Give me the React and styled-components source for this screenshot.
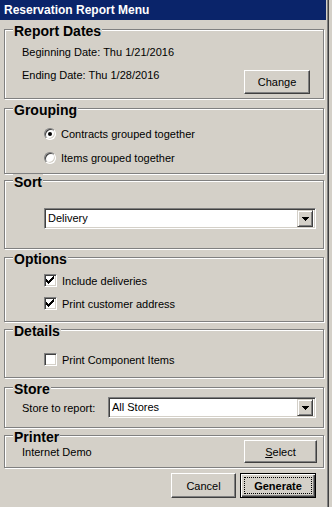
import React from 'react';
import styled, { createGlobalStyle, css } from 'styled-components';

const GlobalStyle = createGlobalStyle`
  html, body {
    margin: 0;
    padding: 0;
    background: #d4d0c8;
  }
  body {
    font-family: "Liberation Sans", Arial, sans-serif;
    font-size: 11px;
    color: #000;
  }
`

const Screen = styled.div`
  width: 332px;
  height: 507px;
  overflow: hidden;
  background: #d4d0c8;
`

const Window = styled.div`
  width: 327px;
  height: 507px;
  display: flex;
  flex-direction: column;
  box-shadow: 1px 0 0 #808080, 2px 0 0 #404040;
`

const TitleBar = styled.div`
  height: 20px;
  margin-right: 1px;
  padding-left: 4px;
  background: #0a246a;
  color: #fff;
  font-weight: bold;
  font-size: 12px;
  line-height: 20px;
  white-space: nowrap;
`

const Body = styled.div`
  display: flex;
  flex-direction: column;
  padding: 9px 3px 0 4px;
`

const GroupBox = styled.div`
  position: relative;
  box-sizing: border-box;
  height: ${p => p.$h}px;
  margin-top: ${p => p.$mt || 0}px;
  padding: ${p => p.$pad};
  border: 1px solid #808080;
  box-shadow: inset 1px 1px 0 #fff, 1px 1px 0 #fff;
`

const Legend = styled.span`
  position: absolute;
  top: -7px;
  left: 8px;
  padding: 0 1px;
  background: #d4d0c8;
  font-weight: bold;
  font-size: 14px;
  line-height: 16px;
  white-space: nowrap;
`

const Line = styled.div`
  line-height: 23px;
  white-space: nowrap;
`

const Row = styled.div`
  display: flex;
  justify-content: space-between;
  align-items: ${p => p.$align || 'center'};
`

const OptionRow = styled.label`
  display: flex;
  align-items: center;
  gap: ${p => p.$gap || 5}px;
  height: ${p => p.$h || 23}px;
  white-space: nowrap;
`

const Radio = styled.span`
  box-sizing: border-box;
  width: 12px;
  height: 12px;
  border-radius: 50%;
  background: #fff;
  border: 1px solid;
  border-color: #808080 #fff #fff #808080;
  box-shadow: inset 1px 1px 0 #404040, inset -1px -1px 0 #d4d0c8;
  display: flex;
  align-items: center;
  justify-content: center;
  &::after {
    content: '';
    width: 4px;
    height: 4px;
    border-radius: 50%;
    background: ${p => (p.$checked ? '#000' : 'transparent')};
  }
`

const CheckBox = styled.span`
  box-sizing: border-box;
  width: 13px;
  height: 13px;
  background: #fff;
  border: 1px solid;
  border-color: #808080 #fff #fff #808080;
  box-shadow: inset 1px 1px 0 #404040, inset -1px -1px 0 #d4d0c8;
  display: flex;
  svg {
    display: block;
  }
`

const Combo = styled.div`
  box-sizing: border-box;
  flex: 1;
  height: 21px;
  display: flex;
  align-items: center;
  padding: 2px 2px 2px 3px;
  background: #fff;
  border: 1px solid;
  border-color: #808080 #fff #fff #808080;
  box-shadow: inset 1px 1px 0 #404040, inset -1px -1px 0 #d4d0c8;
`

const ComboText = styled.span`
  flex: 1;
  line-height: 17px;
  white-space: nowrap;
`

const DropButton = styled.span`
  box-sizing: border-box;
  width: 16px;
  height: 17px;
  display: flex;
  align-items: center;
  justify-content: center;
  background: #d4d0c8;
  border: 1px solid;
  border-color: #d4d0c8 #404040 #404040 #d4d0c8;
  box-shadow: inset 1px 1px 0 #fff, inset -1px -1px 0 #808080;
`

const Label = styled.span`
  width: 86px;
  flex: none;
  white-space: nowrap;
`

const Button = styled.button`
  box-sizing: border-box;
  width: ${p => p.$w}px;
  height: ${p => p.$h}px;
  margin-top: ${p => p.$mt || 0}px;
  padding: 0;
  flex: none;
  font-family: "Liberation Sans", Arial, sans-serif;
  font-size: 11px;
  color: #000;
  background: #d4d0c8;
  border: 1px solid;
  border-color: #fff #404040 #404040 #fff;
  box-shadow: inset -1px -1px 0 #808080;
  ${p => p.$default && css`
    border: 1px solid #000;
    box-shadow: inset 1px 1px 0 #fff, inset -1px -1px 0 #404040, inset -2px -2px 0 #808080;
    font-weight: bold;
    outline: 1px dotted #000;
    outline-offset: -5px;
  `}
`

const ButtonBar = styled.div`
  display: flex;
  justify-content: flex-end;
  gap: 4px;
  margin-top: 5px;
  padding-right: 8px;
`

function Check({ checked }) {
  return (
    <CheckBox>
      {checked && (
        <svg width="11" height="11" viewBox="0 0 11 11">
          <path d="M8 1h1v3H8v1H7v1H6v1H5v1H4v1H3V8H2V7H1V4h1v1h1v1h1V5h1V4h1V3h1V2h1z" fill="#000" />
        </svg>
      )}
    </CheckBox>
  )
}

function ComboBox({ value }) {
  return (
    <Combo>
      <ComboText>{value}</ComboText>
      <DropButton>
        <svg width="7" height="4" viewBox="0 0 7 4">
          <path d="M0 0h7v1H0zM1 1h5v1H1zM2 2h3v1H2zM3 3h1v1H3z" fill="#000" />
        </svg>
      </DropButton>
    </Combo>
  )
}

export default function App() {
  return (
    <Screen>
      <GlobalStyle />
      <Window>
        <TitleBar>Reservation Report Menu</TitleBar>
        <Body>
          <GroupBox $h={70} $pad="11px 13px 0 17px">
            <Legend>Report Dates</Legend>
            <Line>Beginning Date: Thu 1/21/2016</Line>
            <Row $align="flex-start">
              <Line>Ending Date: Thu 1/28/2016</Line>
              <Button $w={66} $h={24} $mt={6}>Change</Button>
            </Row>
          </GroupBox>

          <GroupBox $h={66} $mt={9} $pad="13px 0 0 39px">
            <Legend>Grouping</Legend>
            <OptionRow $h={24}>
              <Radio $checked />
              Contracts grouped together
            </OptionRow>
            <OptionRow $h={24}>
              <Radio />
              Items grouped together
            </OptionRow>
          </GroupBox>

          <GroupBox $h={69} $mt={6} $pad="27px 7px 0 39px">
            <Legend>Sort</Legend>
            <Row>
              <ComboBox value="Delivery" />
            </Row>
          </GroupBox>

          <GroupBox $h={65} $mt={8} $pad="11px 0 0 39px">
            <Legend>Options</Legend>
            <OptionRow>
              <Check checked />
              Include deliveries
            </OptionRow>
            <OptionRow>
              <Check checked />
              Print customer address
            </OptionRow>
          </GroupBox>

          <GroupBox $h={49} $mt={7} $pad="18px 0 0 39px">
            <Legend>Details</Legend>
            <OptionRow>
              <Check />
              Print Component Items
            </OptionRow>
          </GroupBox>

          <GroupBox $h={41} $mt={9} $pad="9px 7px 0 17px">
            <Legend>Store</Legend>
            <Row>
              <Label>Store to report:</Label>
              <ComboBox value="All Stores" />
            </Row>
          </GroupBox>

          <GroupBox $h={33} $mt={7} $pad="4px 6px 0 17px">
            <Legend>Printer</Legend>
            <Row>
              <span>Internet Demo</span>
              <Button $w={73} $h={23}><u>S</u>elect</Button>
            </Row>
          </GroupBox>

          <ButtonBar>
            <Button $w={65} $h={25}>Cancel</Button>
            <Button $w={76} $h={25} $default>Generate</Button>
          </ButtonBar>
        </Body>
      </Window>
    </Screen>
  )
}
